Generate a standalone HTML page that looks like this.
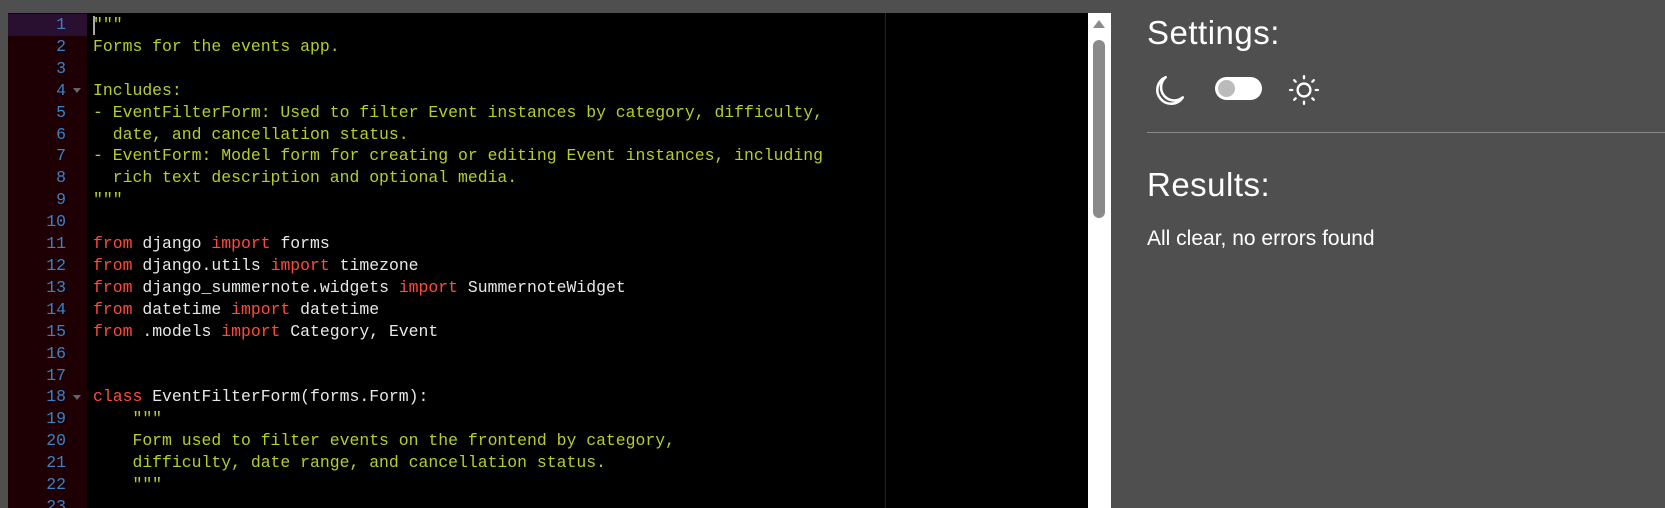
<!DOCTYPE html>
<html><head><style>
body{margin:0;width:1665px;height:508px;background:#4f4f4f;overflow:hidden;position:relative;font-family:"Liberation Sans",sans-serif}
#ed{position:absolute;left:8px;top:13px;width:1080px;height:495px;background:#000;overflow:hidden}
#gut{position:absolute;left:0;top:0;width:79px;height:100%;background:#1e0004}
#hl{position:absolute;left:0;top:1px;width:79px;height:22px;background:#2a1030}
#margin{position:absolute;left:877px;top:0;width:1px;height:100%;background:#222}
pre{margin:0;position:absolute;top:1px;font-family:"Liberation Mono",monospace;font-size:16.45px;line-height:21.9px}
#nums{left:0;width:58px;text-align:right;color:#3b82c4}
#code{left:85px;color:#e8e8e8}
.s{color:#b8cc2a}.k{color:#ff4a3d}
.fold{position:absolute;left:65px;width:0;height:0;border-left:4px solid transparent;border-right:4px solid transparent;border-top:5px solid #666}
#cur{position:absolute;left:85px;top:3px;width:2px;height:19px;background:#aaa}
#sb{position:absolute;left:1088px;top:13px;width:23px;height:495px;background:#fff}
#thumb{position:absolute;left:5px;top:27px;width:12px;height:178px;background:#8a8a8a;border-radius:6px}
#arr{position:absolute;left:5px;top:7px;width:0;height:0;border-left:6px solid transparent;border-right:6px solid transparent;border-bottom:8px solid #8a8a8a}
.h{position:absolute;left:1147px;color:#fff;font-size:33px;font-weight:300;letter-spacing:0.5px}
</style></head><body>
<div id="ed">
<div id="gut"></div><div id="hl"></div><div id="margin"></div>
<pre id="nums">1
2
3
4
5
6
7
8
9
10
11
12
13
14
15
16
17
18
19
20
21
22
23</pre>
<div class="fold" style="top:75px"></div>
<div class="fold" style="top:382px"></div>
<pre id="code"><span class="s">"""
Forms for the events app.

Includes:
- EventFilterForm: Used to filter Event instances by category, difficulty,
  date, and cancellation status.
- EventForm: Model form for creating or editing Event instances, including
  rich text description and optional media.
"""</span>

<span class="k">from</span> django <span class="k">import</span> forms
<span class="k">from</span> django.utils <span class="k">import</span> timezone
<span class="k">from</span> django_summernote.widgets <span class="k">import</span> SummernoteWidget
<span class="k">from</span> datetime <span class="k">import</span> datetime
<span class="k">from</span> .models <span class="k">import</span> Category, Event


<span class="k">class</span> EventFilterForm(forms.Form):
<span class="s">    """
    Form used to filter events on the frontend by category,
    difficulty, date range, and cancellation status.
    """</span>
</pre>
<div id="cur"></div>
</div>
<div id="sb"><div id="arr"></div><div id="thumb"></div></div>
<div class="h" style="top:14px">Settings:</div>
<svg style="position:absolute;left:1153px;top:74px" width="34" height="34" viewBox="0 0 32 32"><path d="M12 3 A13 13 0 1 0 28 22 A11 11 0 0 1 12 3 Z" fill="none" stroke="#fff" stroke-width="2.4" stroke-linejoin="round"/></svg>
<div style="position:absolute;left:1215px;top:77px;width:47px;height:23px;border-radius:12px;background:#fff"><div style="position:absolute;left:3px;top:3px;width:17px;height:17px;border-radius:9px;background:#bbb"></div></div>
<svg style="position:absolute;left:1288px;top:74px" width="32" height="32" viewBox="0 0 30 30" stroke="#fff" stroke-width="2.2" stroke-linecap="round" fill="none"><circle cx="15" cy="15" r="6"/><path d="M15 2v2M15 26v2M2 15h2M26 15h2M5.8 5.8l1.4 1.4M22.8 22.8l1.4 1.4M5.8 24.2l1.4-1.4M22.8 7.2l1.4-1.4"/></svg>
<div style="position:absolute;left:1147px;top:132px;width:518px;height:1px;background:#8a8a8a"></div>
<div class="h" style="top:166px">Results:</div>
<div style="position:absolute;left:1147px;top:227px;color:#fff;font-size:21px">All clear, no errors found</div>
</body></html>
